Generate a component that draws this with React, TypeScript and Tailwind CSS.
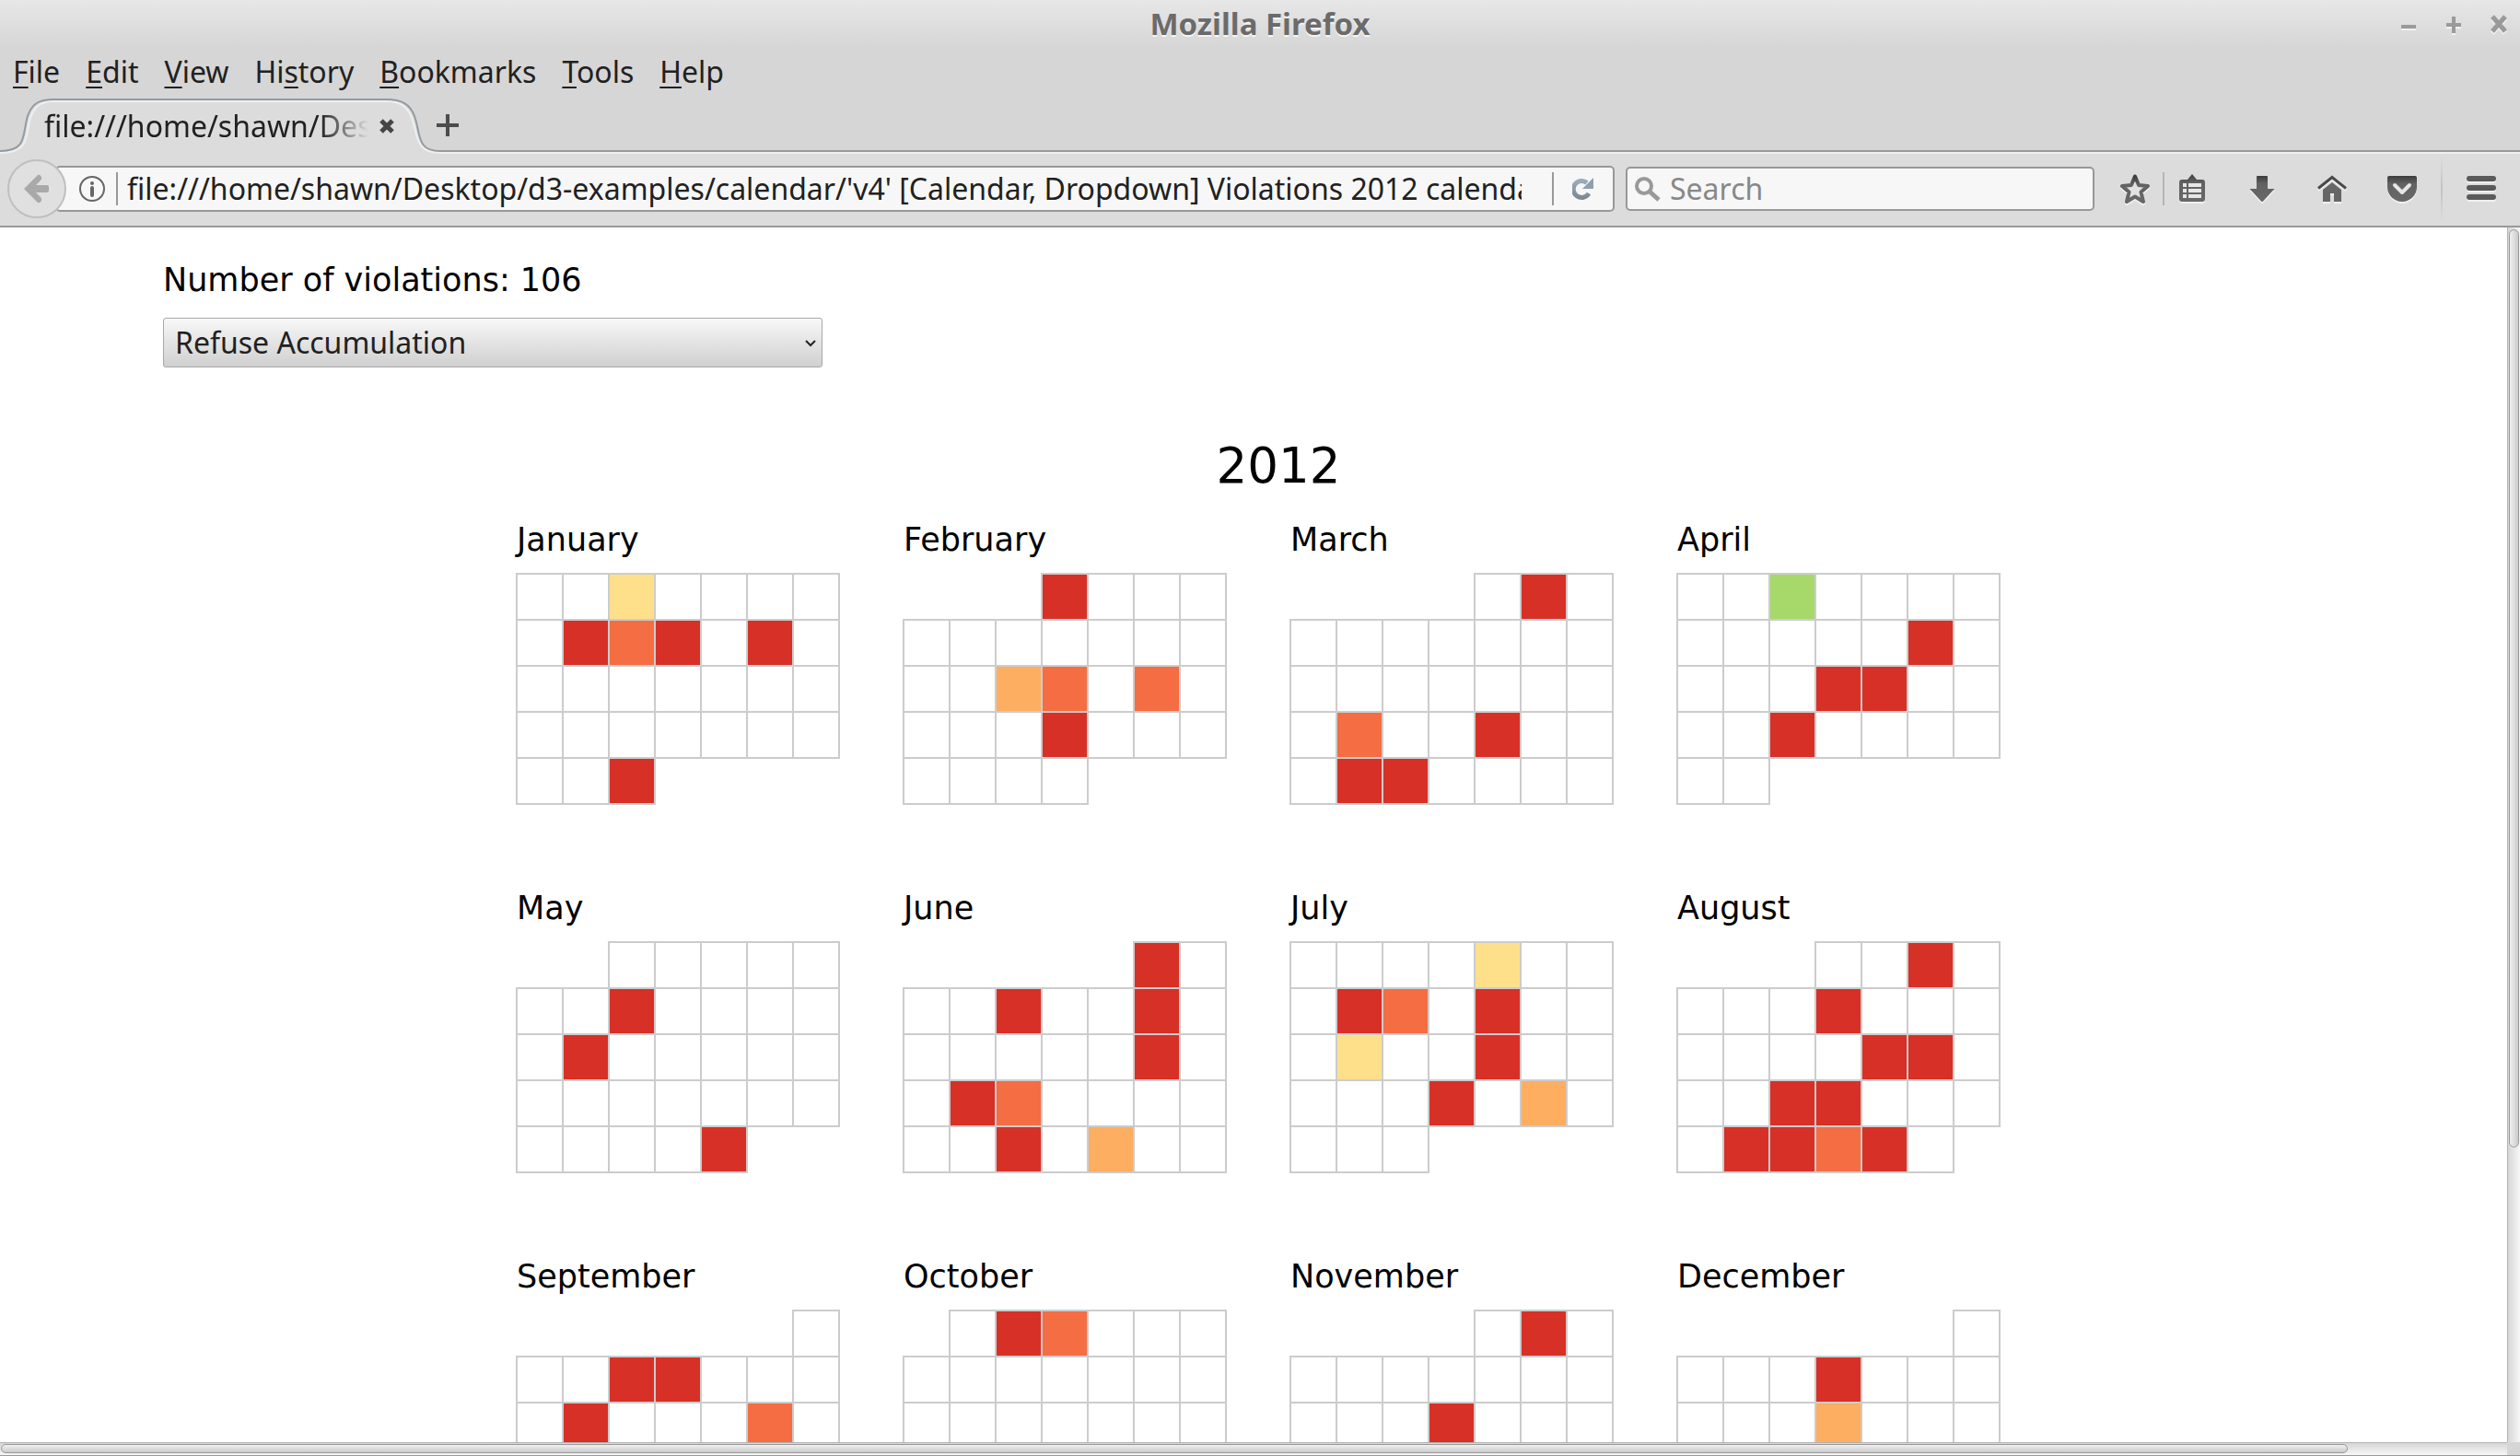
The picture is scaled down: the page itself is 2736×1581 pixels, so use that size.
import type { ReactNode } from "react";

const RED = "bg-[#d73027]";
const ORANGE = "bg-[#f46d43]";
const AMBER = "bg-[#fdae61]";
const YELLOW = "bg-[#fee08b]";
const GREEN = "bg-[#a6d96a]";

const YEAR = 2012;

const months: { name: string; days: Record<number, string> }[] = [
  { name: "January", days: { 3: YELLOW, 9: RED, 10: ORANGE, 11: RED, 13: RED, 31: RED } },
  { name: "February", days: { 1: RED, 14: AMBER, 15: ORANGE, 17: ORANGE, 22: RED } },
  { name: "March", days: { 2: RED, 19: ORANGE, 22: RED, 26: RED, 27: RED } },
  { name: "April", days: { 3: GREEN, 13: RED, 18: RED, 19: RED, 24: RED } },
  { name: "May", days: { 8: RED, 14: RED, 31: RED } },
  { name: "June", days: { 1: RED, 5: RED, 8: RED, 15: RED, 18: RED, 19: ORANGE, 26: RED, 28: AMBER } },
  { name: "July", days: { 5: YELLOW, 9: RED, 10: ORANGE, 12: RED, 16: YELLOW, 19: RED, 25: RED, 27: AMBER } },
  { name: "August", days: { 3: RED, 8: RED, 16: RED, 17: RED, 21: RED, 22: RED, 27: RED, 28: RED, 29: ORANGE, 30: RED } },
  { name: "September", days: { 4: RED, 5: RED, 10: RED, 14: ORANGE } },
  { name: "October", days: { 2: RED, 3: ORANGE } },
  { name: "November", days: { 2: RED, 14: RED } },
  { name: "December", days: { 5: RED, 12: AMBER } },
];

const menus: [string, string, string][] = [
  ["", "F", "ile"],
  ["", "E", "dit"],
  ["", "V", "iew"],
  ["Hi", "s", "tory"],
  ["", "B", "ookmarks"],
  ["", "T", "ools"],
  ["", "H", "elp"],
];

function Month({ index }: { index: number }) {
  const { name, days } = months[index];
  const start = new Date(YEAR, index, 1).getDay();
  const count = new Date(YEAR, index + 1, 0).getDate();
  const weeks = Math.ceil((start + count) / 7);
  return (
    <section>
      <h2 className="mb-4 pl-px text-[35px] leading-10">{name}</h2>
      <table className="w-[352px] table-fixed border-collapse" aria-label={name}>
        <tbody>
          {Array.from({ length: weeks }, (_, w) => (
            <tr key={w} className="h-[50px]">
              {Array.from({ length: 7 }, (_, d) => {
                const day = w * 7 + d + 1 - start;
                if (day < 1 || day > count) return <td key={d} className="p-0" />;
                return <td key={d} className={`border-2 border-[#ccc] p-0 ${days[day] ?? ""}`} />;
              })}
            </tr>
          ))}
        </tbody>
      </table>
    </section>
  );
}

function WindowButton({ label, children }: { label: string; children: ReactNode }) {
  return (
    <button aria-label={label} className="drop-shadow-[0_2px_0_#f2f2f2]">
      <svg viewBox="0 0 20 20" className="size-5" stroke="#9a9a9a" strokeWidth="4" fill="none">
        {children}
      </svg>
    </button>
  );
}

function ToolButton({ label, children }: { label: string; children: ReactNode }) {
  return (
    <button aria-label={label} className="shrink-0 drop-shadow-[0_2px_0_#f0f0f0]">
      <svg viewBox="0 0 32 32" className="size-8">
        {children}
      </svg>
    </button>
  );
}

export default function App() {
  return (
    <div className="flex h-screen flex-col overflow-hidden bg-[#d6d6d6] font-['Noto_Sans',sans-serif] text-[32px] text-[#212121]">
      <svg className="absolute size-0" aria-hidden="true">
        <defs>
          <linearGradient id="ink" x1="0" y1="0" x2="0" y2="1">
            <stop offset="0" stopColor="#3c3c3c" />
            <stop offset="0.3" stopColor="#626262" />
            <stop offset="1" stopColor="#686868" />
          </linearGradient>
          <linearGradient id="steel" x1="0" y1="0" x2="0" y2="1">
            <stop offset="0" stopColor="#9aabba" />
            <stop offset="1" stopColor="#7d8a96" />
          </linearGradient>
        </defs>
      </svg>

      <header className="grid h-[52px] shrink-0 grid-cols-[1fr_auto_1fr] items-center bg-linear-to-b from-[#e7e7e7] to-[#d6d6d6]">
        <h1 className="col-start-2 text-[33px] font-bold text-[#6b6b6b] [text-shadow:0_2px_0_#f4f4f4]">Mozilla Firefox</h1>
        <div className="flex justify-end gap-[29px] pr-[13px]">
          <WindowButton label="Minimize">
            <path d="M2 13h16" />
          </WindowButton>
          <WindowButton label="Maximize">
            <path d="M2 11h16M10 2v18" />
          </WindowButton>
          <WindowButton label="Close">
            <path d="M3 2l14 16M17 2L3 18" strokeWidth="5" />
          </WindowButton>
        </div>
      </header>

      <nav className="flex h-[52px] shrink-0 items-center gap-7 pl-[14px]">
        {menus.map(([before, key, after]) => (
          <button key={before + key + after}>
            {before}
            <span className="underline decoration-2 underline-offset-4">{key}</span>
            {after}
          </button>
        ))}
      </nav>

      <div className="flex h-[63px] shrink-0">
        <div className="relative h-[63px] w-[478px] shrink-0">
          <svg viewBox="0 0 478 63" className="absolute inset-0 h-full w-full" fill="none">
            <path d="M0 61C32 61 24 42 31 22C36 8 44 4 58 4H420C436 4 444 9 449 22C456 42 450 61 478 61V63H0Z" fill="#dcdcdc" />
            <path d="M0 62C34 62 27 42 33 24C38 10 46 6 58 6H420C434 6 442 11 447 24C454 42 450 62 478 62" stroke="#efefef" strokeWidth="2" />
            <path d="M0 60C30 60 24 42 30 22C35 8 43 4 58 4H420C436 4 445 9 450 22C457 42 452 60 478 60" stroke="#939ba2" strokeWidth="2" />
          </svg>
          <div className="relative flex h-full items-center pt-[3px] pl-12">
            <span className="w-[352px] whitespace-nowrap mask-r-from-85% mask-r-to-100%">file:///home/shawn/Des</span>
            <button aria-label="Close tab" className="ml-3">
              <svg viewBox="0 0 16 16" className="size-4" stroke="#454545" strokeWidth="5">
                <path d="M2 2l12 12M14 2L2 14" />
              </svg>
            </button>
          </div>
        </div>
        <div className="flex flex-1 items-center border-b-2 border-[#efefef]">
          <div className="flex h-full flex-1 items-center border-b-2 border-[#999]">
            <button aria-label="New tab" className="-ml-1 pt-1">
              <svg viewBox="0 0 24 24" className="size-6" stroke="#4c4c4c" strokeWidth="4">
                <path d="M0 12h24M12 0v24" />
              </svg>
            </button>
          </div>
        </div>
      </div>

      <div className="flex h-20 shrink-0 items-center border-b-2 border-[#999] bg-[#dcdcdc] pr-[26px] pb-[2px] pl-2">
        <button
          aria-label="Back"
          className="z-10 flex size-16 shrink-0 items-center justify-center rounded-full border-2 border-[#bfbfbf] bg-[#e0e0e0]"
        >
          <svg viewBox="0 0 28 32" className="h-8 w-7">
            <path d="M0 16L15 1Q17 0 19 3Q20 5 18 7L13 12H25Q27 12 27 14V18Q27 20 25 20H13L18 25Q20 27 19 29Q17 32 15 31Z" fill="#a9a9a9" />
          </svg>
        </button>

        <div className="-ml-3 flex h-[50px] min-w-0 flex-1 items-center rounded-[5px] border-2 border-[#989898] bg-[#f7f7f7]">
          <button aria-label="Site information" className="ml-6 shrink-0">
            <svg viewBox="0 0 28 28" className="size-7">
              <circle cx="14" cy="14" r="13" fill="none" stroke="#666" strokeWidth="2" />
              <circle cx="14" cy="8" r="2" fill="#666" />
              <path d="M14 13v8" stroke="#666" strokeWidth="4" strokeLinecap="round" />
            </svg>
          </button>
          <span className="ml-3 h-9 w-[2px] shrink-0 bg-[#999]" />
          <input
            aria-label="Address"
            className="ml-[10px] h-11 min-w-0 flex-1 bg-transparent outline-none"
            defaultValue="file:///home/shawn/Desktop/d3-examples/calendar/'v4' [Calendar, Dropdown] Violations 2012 calendar"
          />
          <span className="ml-[33px] h-9 w-[2px] shrink-0 bg-[#999]" />
          <button aria-label="Reload" className="mx-5 shrink-0">
            <svg viewBox="0 0 24 24" className="size-6" fill="none">
              <path d="M18 17A9 9 0 1 1 16 5.500" stroke="url(#steel)" strokeWidth="5" />
              <path d="M23 0V12H11Z" fill="#8f9fae" />
            </svg>
          </button>
        </div>

        <label className="ml-3 flex h-12 w-[509px] shrink-0 items-center rounded-[5px] border-2 border-[#989898] bg-[#f7f7f7] pl-2">
          <svg viewBox="0 0 28 28" className="size-7" fill="none" stroke="#999" strokeWidth="4">
            <circle cx="10" cy="11" r="8" />
            <path d="M16 17l10 9" strokeWidth="5" />
          </svg>
          <input
            aria-label="Search"
            placeholder="Search"
            className="ml-[10px] h-11 min-w-0 flex-1 bg-transparent outline-none placeholder:text-[#888]"
          />
        </label>

        <div className="ml-7 flex shrink-0 items-center">
          <ToolButton label="Bookmark this page">
            <path
              d="M16 2.500L20 12L30 13L22.500 19.500L25 30L16 24.500L7 30L9.500 19.500L2 13L12 12Z"
              fill="#e2e2e2"
              stroke="url(#ink)"
              strokeWidth="4"
              strokeLinejoin="round"
            />
          </ToolButton>
          <span className="mx-[14px] h-9 w-[2px] bg-[#b5b5b5]" />
          <div className="flex gap-11">
            <ToolButton label="Bookmarks list">
              <path d="M5 6H11L16 0L21 6H27Q30 6 30 9V27Q30 30 27 30H5Q2 30 2 27V9Q2 6 5 6Z" fill="url(#ink)" />
              <path d="M12 12H26M12 18H26M12 24H26" stroke="#e6e6e6" strokeWidth="4" />
              <path d="M6 12H10M6 18H10M6 24H10" stroke="#e6e6e6" strokeWidth="4" />
            </ToolButton>
            <ToolButton label="Downloads">
              <path d="M11 2H21Q22 2 22 3V16H29.500L17 29.500Q16 30.500 15 29.500L2.500 16H10V3Q10 2 11 2Z" fill="url(#ink)" />
            </ToolButton>
            <ToolButton label="Home">
              <path d="M1 15.500L16 3.500L31 15.500" fill="none" stroke="#4a4a4a" strokeWidth="3" />
              <path d="M6 17L16 9L26 17V30H18V21H14V30H6Z" fill="#666" />
            </ToolButton>
            <ToolButton label="Save to Pocket">
              <path d="M2 2H30Q32 2 32 4V14A16 16 0 0 1 0 14V4Q0 2 2 2Z" fill="url(#ink)" />
              <path d="M8 12L16 20L24 12" fill="none" stroke="#e6e6e6" strokeWidth="4" strokeLinecap="round" strokeLinejoin="round" />
            </ToolButton>
          </div>
          <span className="mx-[26px] h-[72px] w-[2px] bg-linear-to-b from-transparent via-[#c2c2c2] to-transparent" />
          <ToolButton label="Open menu">
            <g fill="#5a5a5a">
              <rect x="0" y="2" width="32" height="6" rx="3" />
              <rect x="0" y="12" width="32" height="6" rx="3" />
              <rect x="0" y="22" width="32" height="6" rx="3" />
            </g>
          </ToolButton>
        </div>
      </div>

      <div className="flex min-h-0 flex-1">
        <main className="min-w-0 flex-1 overflow-hidden bg-white pt-[37px] font-['DejaVu_Sans',sans-serif] text-black">
          <div className="ml-[177px]">
            <p className="text-[35px] leading-10">Number of violations: 106</p>
            <div className="relative mt-[21px] w-[716px]">
              <select
                aria-label="Violation type"
                className="block h-[54px] w-full appearance-none rounded-[3px] border border-[#a8a8a8] bg-linear-to-b from-[#f8f8f8] to-[#d0d0d0] pl-3 font-['Noto_Sans',sans-serif] text-[32px] leading-[44px] text-[#212121]"
              >
                <option>Refuse Accumulation</option>
              </select>
              <svg viewBox="0 0 12 8" className="pointer-events-none absolute top-6 right-[7px] h-2 w-3" fill="none" stroke="#222" strokeWidth="2">
                <path d="M1 1l5 5l5-5" />
              </svg>
            </div>
          </div>
          <div className="mt-[77px] ml-[560px] w-[1656px]">
            <h2 className="mb-[30px] text-center text-[53px] leading-[60px]">{YEAR}</h2>
            <div className="grid auto-rows-[400px] grid-cols-[repeat(4,352px)] gap-x-[68px]">
              {months.map((m, i) => (
                <Month key={m.name} index={i} />
              ))}
            </div>
          </div>
        </main>
        <div className="w-[14px] shrink-0 border-l border-[#b3b3b3] bg-linear-to-r from-[#d6d6d6] to-[#f7f7f7] px-px pt-[2px]">
          <div className="h-[997px] rounded-full border border-[#999] bg-linear-to-r from-[#f0f0f0] to-[#cbcbcb]" />
        </div>
      </div>
      <div className="flex h-[15px] shrink-0 border-b border-[#999]">
        <div className="flex-1 border-t border-[#b3b3b3] bg-linear-to-b from-[#d6d6d6] to-[#f7f7f7] pt-px pr-[173px] pl-px">
          <div className="h-[10px] rounded-full border border-[#999] bg-linear-to-b from-[#f0f0f0] to-[#cbcbcb]" />
        </div>
        <div className="w-[14px]" />
      </div>
    </div>
  );
}
